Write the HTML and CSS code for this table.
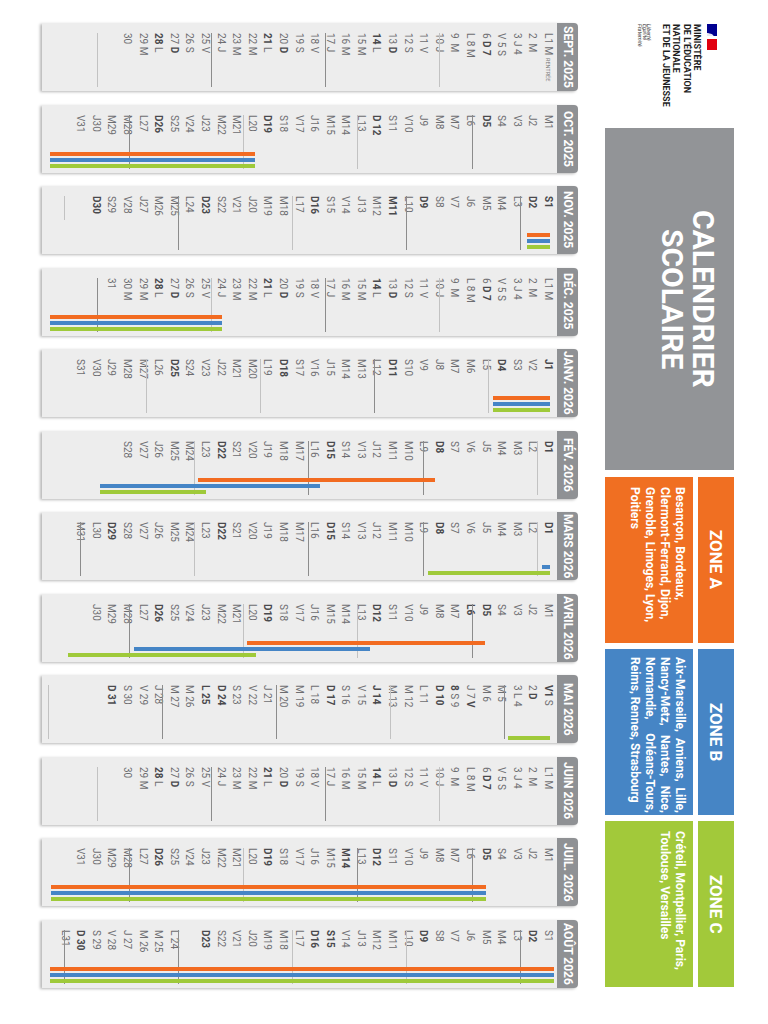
FILE: index.html
```html
<!DOCTYPE html>
<html lang="fr">
<head>
<meta charset="utf-8">
<title>Calendrier scolaire 2025-2026</title>
<link rel="stylesheet" href="styles.css">
</head>
<body>
<div class="sheet">
  <header class="top">
    <div class="logo">
      <svg class="flag" width="10" height="26" viewBox="0 0 10 26">
        <rect x="0" y="0" width="10" height="12" fill="#000091"/>
        <rect x="0" y="12" width="10" height="3" fill="#ffffff"/>
        <rect x="0" y="15" width="10" height="11" fill="#e1000f"/>
        <path d="M1 9 C3 10 5 9.5 6 11 C7 12 6 13 7.5 12.5 C8.5 13.5 8 15 6.5 15 C5 15 4.5 13.5 3 13 C2 12.7 1 13.5 0 13 L0 9 Z" fill="#ffffff" opacity="0.9"/>
      </svg>
      <p class="ministry">MINISTÈRE<br>DE L’ÉDUCATION<br>NATIONALE<br>ET DE LA JEUNESSE</p>
      <p class="motto">Liberté<br>Égalité<br>Fraternité</p>
    </div>
    <div class="title"><h1>CALENDRIER<br>SCOLAIRE</h1></div>
    <div class="zones">
      <div class="zone zone-a">
        <div class="zone-head">ZONE A</div>
        <div class="zone-cities">Besançon, Bordeaux,<br>Clermont-Ferrand, Dijon,<br>Grenoble, Limoges, Lyon,<br>Poitiers</div>
      </div>
      <div class="zone zone-b">
        <div class="zone-head">ZONE B</div>
        <div class="zone-cities wide"><span class="jl">Aix-Marseille, Amiens, Lille,</span><span class="jl">Nancy-Metz, Nantes, Nice,</span><span class="jl">Normandie, Orléans-Tours,</span><span class="ln">Reims, Rennes, Strasbourg</span></div>
      </div>
      <div class="zone zone-c">
        <div class="zone-head">ZONE C</div>
        <div class="zone-cities">Créteil, Montpellier, Paris,<br>Toulouse, Versailles</div>
      </div>
    </div>
  </header>

  <main class="months">
    <section class="month">
      <div class="month-head">SEPT. 2025</div>
      <div class="month-body">
        <ol class="days">
          <li>L1 M<small>RENTRÉE</small></li><li>2  M</li><li>3 J 4</li><li>V 5 S</li><li>6 <b>D 7</b></li><li>L 8 M</li><li>9  M</li><li>10 J</li><li>11 V</li><li>12 S</li><li>13 <b>D</b></li><li><b>14</b> L</li><li>15 M</li><li>16 M</li><li>17 J</li><li>18 V</li><li>19 S</li><li>20 <b>D</b></li><li><b>21</b> L</li><li>22 M</li><li>23 M</li><li>24 J</li><li>25 V</li><li>26 S</li><li>27 <b>D</b></li><li><b>28</b> L</li><li>29 M</li><li>30</li>
        </ol>
        <span class="wk light" style="inset-block-start:117px"></span><span class="wk" style="inset-block-start:231px"></span><span class="wk" style="inset-block-start:345px"></span><span class="wk light" style="inset-block-start:459px"></span>
      </div>
    </section>

    <section class="month">
      <div class="month-head">OCT. 2025</div>
      <div class="month-body">
        <ol class="days">
          <li>M1</li><li>J2</li><li>V3</li><li>S4</li><li><b>D5</b></li><li>L6</li><li>M7</li><li>M8</li><li>J9</li><li>V10</li><li>S11</li><li><b>D 12</b></li><li>L13</li><li>M14</li><li>M15</li><li>J16</li><li>V17</li><li>S18</li><li><b>D19</b></li><li>L20</li><li>M21</li><li>M22</li><li>J23</li><li>V24</li><li>S25</li><li><b>D26</b></li><li>L27</li><li>M28</li><li>M29</li><li>J30</li><li>V31</li>
        </ol>
        <span class="wk" style="inset-block-start:84px"></span><span class="wk light" style="inset-block-start:199px"></span><span class="wk light" style="inset-block-start:313px"></span><span class="wk" style="inset-block-start:427px"></span>
        <span class="bar a" style="inset-block-start:302px;block-size:205px"></span><span class="bar b" style="inset-block-start:302px;block-size:205px"></span><span class="bar c" style="inset-block-start:302px;block-size:205px"></span>
      </div>
    </section>

    <section class="month">
      <div class="month-head">NOV. 2025</div>
      <div class="month-body">
        <ol class="days">
          <li><b>S1</b></li><li><b>D2</b></li><li>L3</li><li>M4</li><li>M5</li><li>J6</li><li>V7</li><li>S8</li><li><b>D9</b></li><li>L10</li><li><b>M11</b></li><li>M12</li><li>J13</li><li>V14</li><li>S15</li><li><b>D16</b></li><li>L17</li><li>M18</li><li>M19</li><li>J20</li><li>V21</li><li>S22</li><li><b>D23</b></li><li>L24</li><li>M25</li><li>M26</li><li>J27</li><li>V28</li><li>S29</li><li><b>D30</b></li>
        </ol>
        <span class="wk" style="inset-block-start:36px"></span><span class="wk" style="inset-block-start:150px"></span><span class="wk light" style="inset-block-start:264px"></span><span class="wk" style="inset-block-start:378px"></span><span class="wk light short" style="inset-block-start:492px"></span>
        <span class="bar a" style="inset-block-start:7px;block-size:23px"></span><span class="bar b" style="inset-block-start:7px;block-size:23px"></span><span class="bar c" style="inset-block-start:7px;block-size:23px"></span>
      </div>
    </section>

    <section class="month">
      <div class="month-head">DÉC. 2025</div>
      <div class="month-body">
        <ol class="days">
          <li>L1 M</li><li>2  M</li><li>3 J 4</li><li>V 5 S</li><li>6 <b>D 7</b></li><li>L 8 M</li><li>9  M</li><li>10 J</li><li>11 V</li><li>12 S</li><li>13 <b>D</b></li><li><b>14</b> L</li><li>15 M</li><li>16 M</li><li>17 J</li><li>18 V</li><li>19 S</li><li>20 <b>D</b></li><li><b>21</b> L</li><li>22 M</li><li>23 M</li><li>24 J</li><li>25 V</li><li>26 S</li><li>27 <b>D</b></li><li><b>28</b> L</li><li>29 M</li><li>30 M</li><li>31</li>
        </ol>
        <span class="wk light" style="inset-block-start:117px"></span><span class="wk" style="inset-block-start:231px"></span><span class="wk light" style="inset-block-start:345px"></span><span class="wk" style="inset-block-start:459px"></span>
        <span class="bar a" style="inset-block-start:335px;block-size:172px"></span><span class="bar b" style="inset-block-start:335px;block-size:172px"></span><span class="bar c" style="inset-block-start:335px;block-size:172px"></span>
      </div>
    </section>

    <section class="month">
      <div class="month-head">JANV. 2026</div>
      <div class="month-body">
        <ol class="days">
          <li><b>J1</b></li><li>V2</li><li>S3</li><li><b>D4</b></li><li>L5</li><li>M6</li><li>M7</li><li>J8</li><li>V9</li><li>S10</li><li><b>D11</b></li><li>L12</li><li>M13</li><li>M14</li><li>J15</li><li>V16</li><li>S17</li><li><b>D18</b></li><li>L19</li><li>M20</li><li>M21</li><li>J22</li><li>V23</li><li>S24</li><li><b>D25</b></li><li>L26</li><li>M27</li><li>M28</li><li>J29</li><li>V30</li><li>S31</li>
        </ol>
        <span class="wk light" style="inset-block-start:68px"></span><span class="wk" style="inset-block-start:182px"></span><span class="wk light" style="inset-block-start:296px"></span><span class="wk light" style="inset-block-start:410px"></span>
        <span class="bar a" style="inset-block-start:7px;block-size:57px"></span><span class="bar b" style="inset-block-start:7px;block-size:57px"></span><span class="bar c" style="inset-block-start:7px;block-size:57px"></span>
      </div>
    </section>

    <section class="month">
      <div class="month-head">FÉV. 2026</div>
      <div class="month-body">
        <ol class="days">
          <li><b>D1</b></li><li>L2</li><li>M3</li><li>M4</li><li>J5</li><li>V6</li><li>S7</li><li><b>D8</b></li><li>L9</li><li>M10</li><li>M11</li><li>J12</li><li>V13</li><li>S14</li><li><b>D15</b></li><li>L16</li><li>M17</li><li>M18</li><li>J19</li><li>V20</li><li>S21</li><li><b>D22</b></li><li>L23</li><li>M24</li><li>M25</li><li>J26</li><li>V27</li><li>S28</li>
        </ol>
        <span class="wk light" style="inset-block-start:19px"></span><span class="wk" style="inset-block-start:133px"></span><span class="wk" style="inset-block-start:248px"></span><span class="wk light" style="inset-block-start:362px"></span>
        <span class="bar a" style="inset-block-start:122px;block-size:237px"></span><span class="bar b" style="inset-block-start:237px;block-size:220px"></span><span class="bar c" style="inset-block-start:351px;block-size:106px"></span>
      </div>
    </section>

    <section class="month">
      <div class="month-head">MARS 2026</div>
      <div class="month-body">
        <ol class="days">
          <li><b>D1</b></li><li>L2</li><li>M3</li><li>M4</li><li>J5</li><li>V6</li><li>S7</li><li><b>D8</b></li><li>L9</li><li>M10</li><li>M11</li><li>J12</li><li>V13</li><li>S14</li><li><b>D15</b></li><li>L16</li><li>M17</li><li>M18</li><li>J19</li><li>V20</li><li>S21</li><li><b>D22</b></li><li>L23</li><li>M24</li><li>M25</li><li>J26</li><li>V27</li><li>S28</li><li><b>D29</b></li><li>L30</li><li>M31</li>
        </ol>
        <span class="wk light" style="inset-block-start:19px"></span><span class="wk" style="inset-block-start:133px"></span><span class="wk" style="inset-block-start:248px"></span><span class="wk light" style="inset-block-start:362px"></span><span class="wk" style="inset-block-start:476px"></span>
        <span class="bar b" style="inset-block-start:7px;block-size:8px"></span><span class="bar c" style="inset-block-start:7px;block-size:122px"></span>
      </div>
    </section>

    <section class="month">
      <div class="month-head">AVRIL 2026</div>
      <div class="month-body">
        <ol class="days">
          <li>M1</li><li>J2</li><li>V3</li><li>S4</li><li><b>D5</b></li><li><b>L6</b></li><li>M7</li><li>M8</li><li>J9</li><li>V10</li><li>S11</li><li><b>D12</b></li><li>L13</li><li>M14</li><li>M15</li><li>J16</li><li>V17</li><li>S18</li><li><b>D19</b></li><li>L20</li><li>M21</li><li>M22</li><li>J23</li><li>V24</li><li>S25</li><li><b>D26</b></li><li>L27</li><li>M28</li><li>M29</li><li>J30</li>
        </ol>
        <span class="wk" style="inset-block-start:84px"></span><span class="wk light" style="inset-block-start:199px"></span><span class="wk light" style="inset-block-start:313px"></span><span class="wk" style="inset-block-start:427px"></span>
        <span class="bar a" style="inset-block-start:72px;block-size:238px"></span><span class="bar b" style="inset-block-start:187px;block-size:236px"></span><span class="bar c" style="inset-block-start:301px;block-size:188px"></span>
      </div>
    </section>

    <section class="month">
      <div class="month-head">MAI 2026</div>
      <div class="month-body">
        <ol class="days">
          <li><b>V1</b> S</li><li>2 <b>D</b></li><li>3 L 4</li><li>M 5</li><li>M 6</li><li>J 7 <b>V</b></li><li><b>8</b> S 9</li><li><b>D 10</b></li><li>L 11</li><li>M 12</li><li>M 13</li><li><b>J 14</b></li><li>V 15</li><li>S 16</li><li><b>D 17</b></li><li>L 18</li><li>M 19</li><li>M 20</li><li>J 21</li><li>V 22</li><li>S 23</li><li><b>D 24</b></li><li><b>L 25</b></li><li>M 26</li><li>M 27</li><li>J 28</li><li>V 29</li><li>S 30</li><li><b>D 31</b></li>
        </ol>
        <span class="wk" style="inset-block-start:52px"></span><span class="wk light" style="inset-block-start:166px"></span><span class="wk" style="inset-block-start:280px"></span><span class="wk" style="inset-block-start:394px"></span><span class="wk light" style="inset-block-start:508px"></span>
        <span class="bar c late" style="inset-block-start:7px;block-size:42px"></span>
      </div>
    </section>

    <section class="month">
      <div class="month-head">JUIN 2026</div>
      <div class="month-body">
        <ol class="days">
          <li>L1 M</li><li>2  M</li><li>3 J 4</li><li>V 5 S</li><li>6 <b>D 7</b></li><li>L 8 M</li><li>9  M</li><li>10 J</li><li>11 V</li><li>12 S</li><li>13 <b>D</b></li><li><b>14</b> L</li><li>15 M</li><li>16 M</li><li>17 J</li><li>18 V</li><li>19 S</li><li>20 <b>D</b></li><li><b>21</b> L</li><li>22 M</li><li>23 M</li><li>24 J</li><li>25 V</li><li>26 S</li><li>27 <b>D</b></li><li><b>28</b> L</li><li>29 M</li><li>30</li>
        </ol>
        <span class="wk light" style="inset-block-start:117px"></span><span class="wk" style="inset-block-start:231px"></span><span class="wk" style="inset-block-start:345px"></span><span class="wk light" style="inset-block-start:459px"></span>
      </div>
    </section>

    <section class="month">
      <div class="month-head">JUIL. 2026</div>
      <div class="month-body">
        <ol class="days">
          <li>M1</li><li>J2</li><li>V3</li><li>S4</li><li><b>D5</b></li><li>L6</li><li>M7</li><li>M8</li><li>J9</li><li>V10</li><li>S11</li><li><b>D12</b></li><li>L13</li><li><b>M14</b></li><li>M15</li><li>J16</li><li>V17</li><li>S18</li><li><b>D19</b></li><li>L20</li><li>M21</li><li>M22</li><li>J23</li><li>V24</li><li>S25</li><li><b>D26</b></li><li>L27</li><li>M28</li><li>M29</li><li>J30</li><li>V31</li>
        </ol>
        <span class="wk" style="inset-block-start:84px"></span><span class="wk" style="inset-block-start:199px"></span><span class="wk light" style="inset-block-start:313px"></span><span class="wk" style="inset-block-start:427px"></span>
        <span class="bar a" style="inset-block-start:71px;block-size:435px"></span><span class="bar b" style="inset-block-start:71px;block-size:435px"></span><span class="bar c" style="inset-block-start:71px;block-size:435px"></span>
      </div>
    </section>

    <section class="month">
      <div class="month-head">AOÛT 2026</div>
      <div class="month-body">
        <ol class="days">
          <li>S1</li><li><b>D2</b></li><li>L3</li><li>M4</li><li>M5</li><li>J6</li><li>V7</li><li>S8</li><li><b>D9</b></li><li>L10</li><li>M11</li><li>M12</li><li>J13</li><li>V14</li><li><b>S15</b></li><li><b>D16</b></li><li>L17</li><li>M18</li><li>M19</li><li>J20</li><li>V21</li><li>S22</li><li><b>D23</b></li><li></li><li>L 24</li><li>M 25</li><li>M 26</li><li>J 27</li><li>V 28</li><li>S 29</li><li><b>D 30</b></li><li>L31</li>
        </ol>
        <span class="wk" style="inset-block-start:36px"></span><span class="wk light" style="inset-block-start:150px"></span><span class="wk light" style="inset-block-start:264px"></span><span class="wk" style="inset-block-start:378px"></span><span class="wk" style="inset-block-start:492px"></span>
        <span class="bar a" style="inset-block-start:3px;block-size:504px"></span><span class="bar b" style="inset-block-start:3px;block-size:504px"></span><span class="bar c" style="inset-block-start:3px;block-size:504px"></span>
      </div>
    </section>
  </main>
</div>
</body>
</html>
```

FILE: styles.css
```css
* {
  box-sizing: border-box;
  margin: 0;
  padding: 0;
}

/* the sheet is a landscape page set on its side: text runs top to bottom,
   lines stack from right to left */
html {
  writing-mode: vertical-rl;
  background: #ffffff;
}

body {
  inline-size: 1024px;
  block-size: 768px;
  overflow: hidden;
  font-family: Roboto, "Liberation Sans", sans-serif;
  color: #6d6e71;
}

.sheet {
  inline-size: 1024px;
  block-size: 768px;
  padding-block-start: 34px;
  padding-inline-start: 20px;
}

/* ---------- top band ---------- */
.top {
  display: flex;
  block-size: 129px;
}

.logo {
  inline-size: 95px;
  padding-block-start: 17px;
  padding-inline-start: 4px;
  color: #1e1e1e;
}

.flag {
  display: block;
}

.ministry {
  margin-block-start: 5px;
  font-size: 9px;
  line-height: 10.4px;
  font-weight: 700;
}

.motto {
  margin-block-start: 9px;
  font-size: 5.5px;
  line-height: 4.8px;
  font-style: italic;
  color: #333333;
}

.title {
  inline-size: 342px;
  margin-inline-start: 13px;
  padding-block-start: 15px;
  background: #929497;
  color: #ffffff;
  text-align: center;
}

.title h1 {
  font-size: 30px;
  line-height: 31px;
  font-weight: 700;
}

.zones {
  display: flex;
  gap: 6px;
  margin-inline-start: 7px;
}

.zone {
  inline-size: 166px;
  display: flex;
  flex-direction: column;
  gap: 5px;
}

.zone-head {
  block-size: 36px;
  display: flex;
  align-items: center;
  justify-content: center;
  color: #ffffff;
  font-size: 17px;
  font-weight: 700;
}

.zone-cities {
  flex: 1;
  padding-block-start: 6px;
  padding-inline: 10px 6px;
  color: #ffffff;
  font-size: 12px;
  line-height: 15px;
  font-weight: 700;
}

.zone-cities.wide {
  padding-inline: 8px 2px;
}

.jl,
.ln {
  display: block;
}

.jl {
  text-align: justify;
  text-align-last: justify;
}

.zone-a .zone-head,
.zone-a .zone-cities {
  background: #f06f22;
}

.zone-b .zone-head,
.zone-b .zone-cities {
  background: #4685c5;
}

.zone-c .zone-head,
.zone-c .zone-cities {
  background: #a2c93a;
}

/* ---------- months ---------- */
.months {
  display: grid;
  grid-template-columns: repeat(12, 68px);
  column-gap: 13.5px;
  margin-block-start: 27px;
  margin-inline-start: 3px;
}

.month {
  border-start-start-radius: 4px;
  border-start-end-radius: 4px;
  box-shadow: -2px 1px 3px rgba(0, 0, 0, 0.28);
}

.month-head {
  block-size: 21px;
  border-start-start-radius: 4px;
  border-start-end-radius: 4px;
  background: #8f9194;
  color: #ffffff;
  font-size: 12px;
  line-height: 21px;
  font-weight: 700;
  text-align: center;
  white-space: nowrap;
}

.month-body {
  position: relative;
  block-size: 515px;
  padding-block-start: 1px;
  padding-inline-start: 10px;
  background: #ededed;
}

.days {
  list-style: none;
}

.days li {
  block-size: 15.6px;
  font-size: 10px;
  line-height: 15.6px;
  white-space: pre;
  color: #6d6e71;
}

.days b {
  color: #4a4a4d;
  font-weight: 700;
}

.days small {
  margin-inline-start: 3px;
  font-size: 5.5px;
  color: #7a7a7a;
}

.wk {
  position: absolute;
  inset-inline-start: 10px;
  inline-size: 54px;
  block-size: 1px;
  background: #8c8c8c;
}

.wk.light {
  background: #c2c2c2;
}

.wk.short {
  inline-size: 24px;
}

.bar {
  position: absolute;
  inline-size: 4px;
}

.bar.a {
  inset-inline-start: 47px;
  background: #f26b21;
}

.bar.b {
  inset-inline-start: 53px;
  background: #4585c6;
}

.bar.c {
  inset-inline-start: 59px;
  background: #9fca3a;
}

.bar.c.late {
  inset-inline-start: 61px;
}
```
